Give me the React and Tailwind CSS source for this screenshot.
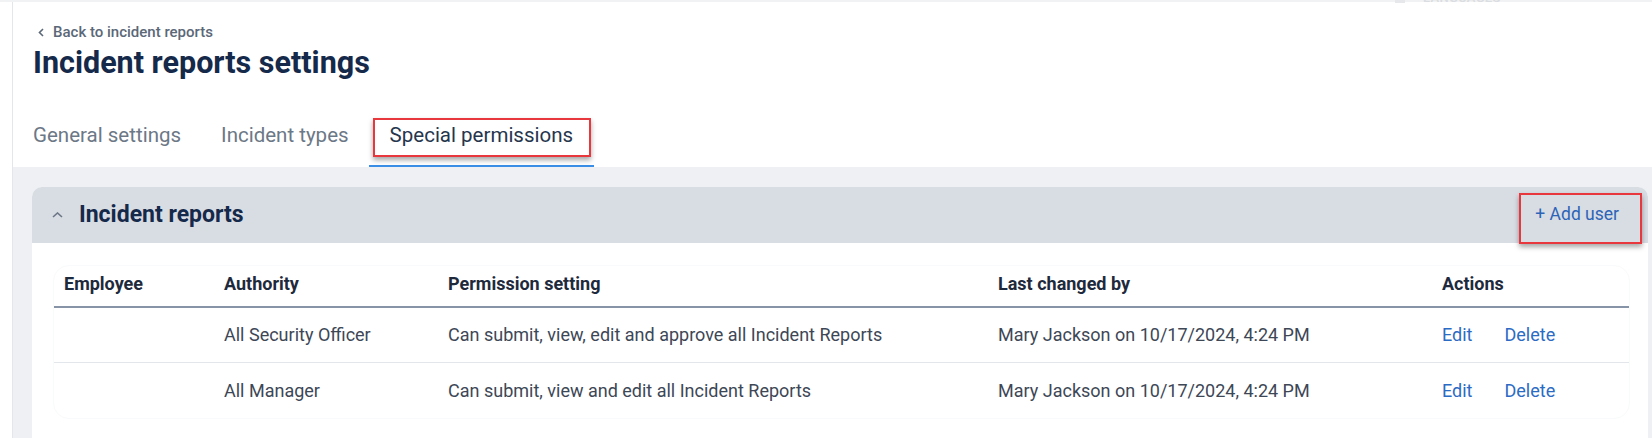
import React from "react"

const rows = [
  {
    employee: "",
    authority: "All Security Officer",
    permission: "Can submit, view, edit and approve all Incident Reports",
    changed: "Mary Jackson on 10/17/2024, 4:24 PM",
  },
  {
    employee: "",
    authority: "All Manager",
    permission: "Can submit, view and edit all Incident Reports",
    changed: "Mary Jackson on 10/17/2024, 4:24 PM",
  },
]

const cols = "grid grid-cols-[170px_224px_550px_444px_1fr]"

function RedBox({ className }) {
  return (
    <div
      className={`absolute border-2 border-[#e8383d] shadow-[0_3px_5px_rgba(0,0,0,0.35)] pointer-events-none ${className}`}
    />
  )
}

export default function App() {
  return (
    <div className="w-full h-[438px] overflow-hidden bg-white font-['Roboto',sans-serif] flex flex-col">
      {/* top strip */}
      <div className="h-[2px] bg-[#f1f2f3] shrink-0 relative">
        <span className="absolute left-[1395px] -top-[8px] w-[10px] h-[11px] bg-[#e6e8eb]" />
        <span className="absolute left-[1423px] -top-[9px] text-[13px] leading-[14px] font-medium tracking-wide text-[#dadde1]">
          LANGUAGES
        </span>
      </div>

      <div className="flex flex-1 min-h-0">
        <div className="w-[12px] shrink-0 bg-white" />
        <div className="flex-1 flex flex-col border-l border-[#e4e6e9] min-w-0">
          {/* page header */}
          <div className="pl-[20px] pt-[20px]">
            <a className="flex items-center gap-[9px] text-[15px] leading-[20px] font-medium text-[#5b6878]">
              <svg width="6" height="9" viewBox="0 0 6 9" className="ml-[5px]">
                <path d="M5 1 L1.5 4.5 L5 8" fill="none" stroke="#5b6878" strokeWidth="1.6" />
              </svg>
              Back to incident reports
            </a>
            <h1 className="mt-[3px] text-[30.5px] leading-[36px] font-bold text-[#15294a]">
              Incident reports settings
            </h1>
          </div>

          {/* tabs */}
          <div className="mt-[42px] flex">
            <button className="px-[20px] pb-[20px] text-[20.5px] leading-[24px] text-[#6c7886]">
              General settings
            </button>
            <button className="px-[20px] pb-[20px] text-[20.5px] leading-[24px] text-[#6c7886]">
              Incident types
            </button>
            <button className="relative px-[21px] pb-[18px] text-[20.5px] leading-[24px] text-[#26364d] border-b-2 border-[#3a8ee6]">
              Special permissions
              <RedBox className="left-[4px] right-[3px] -top-[5px] h-[39px]" />
            </button>
          </div>

          {/* content */}
          <div className="flex-1 bg-[#eef0f3] pl-[19px] pr-[4px] pt-[20px]">
            <div className="rounded-t-[10px] bg-white h-full flex flex-col">
              <div className="h-[56px] shrink-0 bg-[#d8dce3] rounded-t-[10px] flex items-center pl-[20px] pr-[29px]">
                <svg width="11" height="6" viewBox="0 0 11 6" className="shrink-0">
                  <path d="M1 5 L5.5 1 L10 5" fill="none" stroke="#6b7785" strokeWidth="1.6" />
                </svg>
                <h2 className="ml-[16px] text-[23px] leading-[28px] font-bold text-[#15294a]">
                  Incident reports
                </h2>
                <div className="ml-auto relative">
                  <button className="text-[17.5px] leading-[22px] text-[#2c64b8]">+ Add user</button>
                  <RedBox className="-left-[16px] -right-[23px] -top-[10px] -bottom-[17px]" />
                </div>
              </div>

              <div className="ml-[21px] mr-[18px] mt-[22px] rounded-2xl border border-[#f9fafb]">
                <div
                  className={`${cols} pt-[7px] pb-[11px] border-b-2 border-[#8794a7] text-[18px] leading-[22px] font-bold text-[#1e2a3c]`}
                >
                  <div className="pl-[10px]">Employee</div>
                  <div>Authority</div>
                  <div>Permission setting</div>
                  <div>Last changed by</div>
                  <div>Actions</div>
                </div>
                {rows.map((r, i) => (
                  <div
                    key={i}
                    className={`${cols} h-[55px] items-center text-[18px] leading-[22px] text-[#3d4756] ${
                      i === 0 ? "border-b border-[#e3e7ec]" : ""
                    }`}
                  >
                    <div className="pl-[10px]">{r.employee}</div>
                    <div>{r.authority}</div>
                    <div>{r.permission}</div>
                    <div>{r.changed}</div>
                    <div className="flex gap-[32px] text-[#2c6bc4]">
                      <a>Edit</a>
                      <a>Delete</a>
                    </div>
                  </div>
                ))}
              </div>
            </div>
          </div>
        </div>
      </div>
    </div>
  )
}
